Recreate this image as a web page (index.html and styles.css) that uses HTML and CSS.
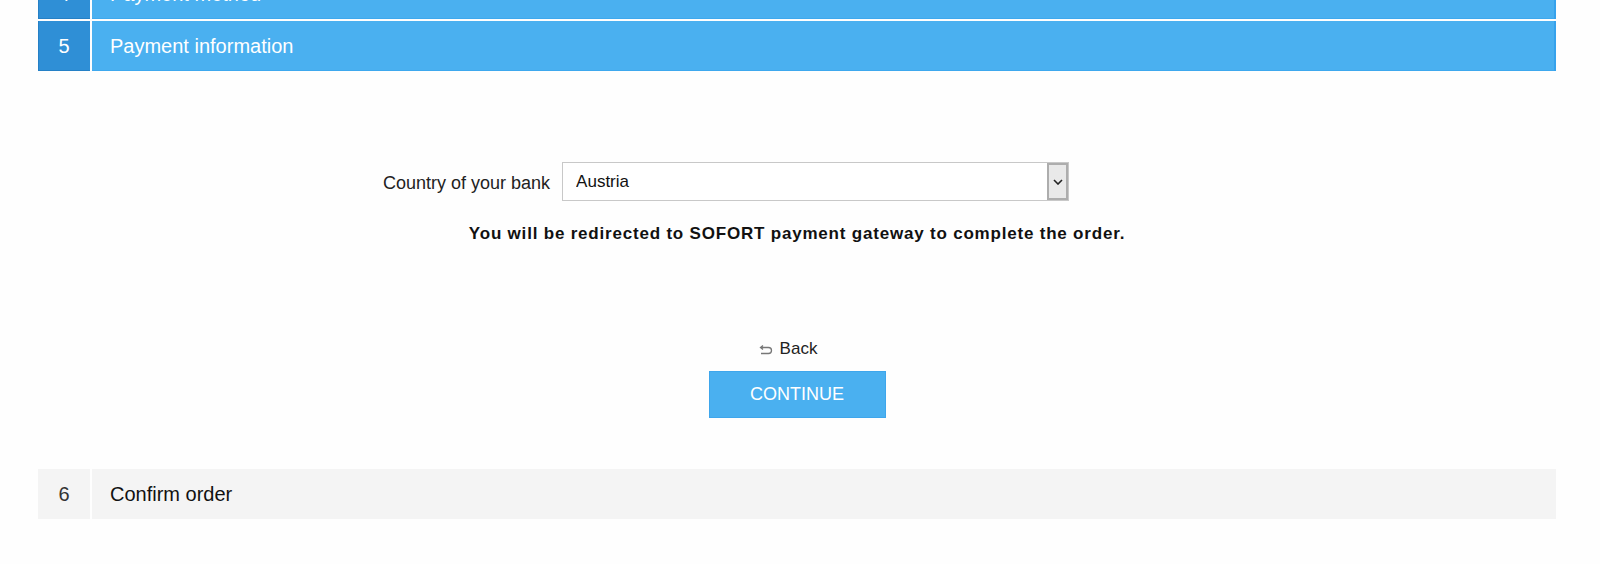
FILE: index.html
```html
<!DOCTYPE html>
<html lang="en">
<head>
    <meta charset="UTF-8">
    <meta name="viewport" content="width=device-width, initial-scale=1.0">
    <title>Checkout - Payment information</title>
    <link rel="stylesheet" href="styles.css">
</head>
<body>

    <div class="checkout">
        <!-- Previous step (scrolled partly out of view) -->
        <div class="step step-open step-prev">
            <span class="step-num">4</span>
            <span class="step-title">Payment method</span>
        </div>

        <!-- Current step -->
        <div class="step step-open">
            <span class="step-num">5</span>
            <span class="step-title">Payment information</span>
        </div>

        <div class="step-body">
            <div class="field-row">
                <label for="bankCountry">Country of your bank</label>
                <div class="select-box">
                    <select id="bankCountry">
                        <option selected>Austria</option>
                        <option>Belgium</option>
                        <option>Germany</option>
                        <option>Italy</option>
                        <option>Netherlands</option>
                        <option>Spain</option>
                        <option>Switzerland</option>
                    </select>
                    <span class="select-arrow">
                        <svg width="10" height="6" viewBox="0 0 10 6"><path d="M1 1l4 4 4-4" fill="none" stroke="#222" stroke-width="1.6"/></svg>
                    </span>
                </div>
            </div>

            <p class="redirect-note">You will be redirected to SOFORT payment gateway to complete the order.</p>

            <div class="actions">
                <a href="#" class="back-link">
                    <svg width="15" height="11" viewBox="0 0 15 11"><path d="M4 1.5L1.5 3.5 4 5.5M2 3.5h7.5a3 3 0 0 1 0 6H2" fill="none" stroke="#777" stroke-width="1.3"/></svg>
                    Back
                </a>
                <button class="continue-btn" id="continueBtn">CONTINUE</button>
            </div>
        </div>

        <!-- Next step -->
        <div class="step step-closed">
            <span class="step-num">6</span>
            <span class="step-title">Confirm order</span>
        </div>
    </div>

</body>
</html>
```

FILE: styles.css
```css
body {
    font-family: 'Liberation Sans', Arial, sans-serif;
    background-color: #fefefe;
    margin: 0;
    padding: 0;
    color: #111;
    overflow: hidden;
}

.checkout {
    padding: 0 44px 0 38px;
}

/* Step header bars */
.step {
    display: flex;
    height: 50px;
    margin-bottom: 2px;
}

.step-num {
    width: 52px;
    margin-right: 2px;
    display: flex;
    align-items: center;
    justify-content: center;
    font-size: 20px;
    padding-top: 1px;
}

.step-title {
    flex: 1;
    display: flex;
    align-items: center;
    padding-left: 18px;
    padding-top: 1px;
    font-size: 20px;
}

.step-prev {
    margin-top: -31px;
}

.step-open .step-num {
    background-color: #2f8fd6;
    color: #fff;
    box-shadow: inset 1px 0 0 #2580c6, inset 0 -1px 0 #2580c6;
}

.step-open .step-title {
    background-color: #4ab0f0;
    color: #fff;
    box-shadow: inset -2px 0 0 #36a2ec, inset 0 -1px 0 #3ea8ee;
}

.step-closed .step-num,
.step-closed .step-title {
    background-color: #f4f4f4;
    color: #111;
}

.step-closed .step-num {
    color: #333;
}

/* Step content */
.step-body {
    padding-top: 89px;
    padding-bottom: 51px;
}

.field-row {
    display: flex;
    align-items: center;
    padding-left: 345px;
    gap: 12px;
}

.field-row label {
    font-size: 18px;
    color: #222;
    padding-top: 3px;
}

.select-box {
    display: flex;
    width: 507px;
    height: 39px;
    box-sizing: border-box;
    border: 1px solid #c8c8c8;
    background-color: #fff;
}

.select-box select {
    flex: 1;
    appearance: none;
    -webkit-appearance: none;
    border: none;
    background: transparent;
    font-family: inherit;
    font-size: 17px;
    color: #111;
    padding: 0 0 0 13px;
    outline: none;
}

.select-arrow {
    width: 17px;
    display: flex;
    align-items: center;
    justify-content: center;
    background-color: #e9e9e9;
    border: 2px solid #adadad;
}

.redirect-note {
    margin: 21px 0 0;
    text-align: center;
    font-size: 17px;
    font-weight: bold;
    letter-spacing: 0.8px;
    line-height: 24px;
    color: #111;
}

.actions {
    margin-top: 93px;
    display: flex;
    flex-direction: column;
    align-items: center;
}

.back-link {
    display: flex;
    align-items: center;
    gap: 6px;
    font-size: 17px;
    line-height: 20px;
    color: #222;
    text-decoration: none;
    margin-right: 18px;
}

.continue-btn {
    margin-top: 12px;
    width: 177px;
    height: 47px;
    background-color: #4ab0f0;
    color: #fff;
    border: 1px solid #3ea6ec;
    font-family: inherit;
    font-size: 18px;
    cursor: pointer;
}

.continue-btn:hover {
    background-color: #3aa2e6;
}

.continue-btn:focus {
    outline: none;
}
```
